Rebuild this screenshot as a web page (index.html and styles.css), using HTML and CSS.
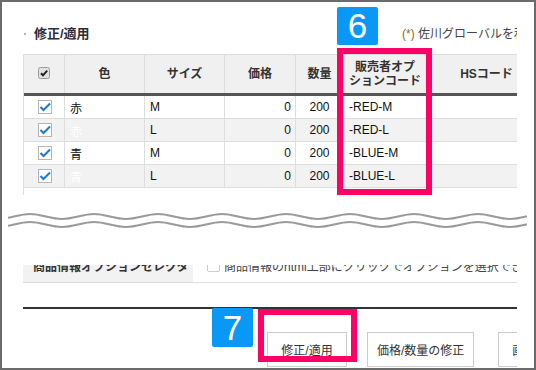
FILE: index.html
```html
<!DOCTYPE html>
<html lang="ja">
<head>
<meta charset="utf-8">
<title>修正/適用</title>
<link rel="stylesheet" href="styles.css">
</head>
<body>
<div class="frame">
  <div class="col top">
    <div class="title-row">
      <h2 class="title"><span class="dot"></span>修正/適用</h2>
      <p class="note"><span class="ast">(*)</span> 佐川グローバルを利用する場合は必須です</p>
    </div>
    <div class="grid-wrap">
      <div class="row head">
        <div class="cell first">
          <svg class="hcheck" width="12" height="12" viewBox="0 0 12 12"><rect x="0.5" y="0.5" width="11" height="11" rx="2" fill="#e2e2e2" stroke="#9a9a9a"/><path d="M3 6.2 L5 8.3 L9.2 3.6" fill="none" stroke="#222" stroke-width="2"/></svg>
        </div>
        <div class="cell">色</div>
        <div class="cell">サイズ</div>
        <div class="cell">価格</div>
        <div class="cell">数量</div>
        <div class="cell">販売者オプ<br>ションコード</div>
        <div class="cell">HSコード</div>
      </div>
      <div class="row">
        <div class="cell first"><svg class="rcheck" width="14" height="14" viewBox="0 0 14 14"><rect x="0.5" y="0.5" width="13" height="13" fill="#fff" stroke="#b5b5b5"/><path d="M2.5 7 L5.5 10 L12 3.5" fill="none" stroke="#1a78cf" stroke-width="2"/></svg></div>
        <div class="cell">赤</div>
        <div class="cell">M</div>
        <div class="cell num">0</div>
        <div class="cell qty">200</div>
        <div class="cell">-RED-M</div>
        <div class="cell"></div>
      </div>
      <div class="row alt">
        <div class="cell first"><svg class="rcheck" width="14" height="14" viewBox="0 0 14 14"><rect x="0.5" y="0.5" width="13" height="13" fill="#fff" stroke="#b5b5b5"/><path d="M2.5 7 L5.5 10 L12 3.5" fill="none" stroke="#1a78cf" stroke-width="2"/></svg></div>
        <div class="cell faint">赤</div>
        <div class="cell">L</div>
        <div class="cell num">0</div>
        <div class="cell qty">200</div>
        <div class="cell">-RED-L</div>
        <div class="cell"></div>
      </div>
      <div class="row">
        <div class="cell first"><svg class="rcheck" width="14" height="14" viewBox="0 0 14 14"><rect x="0.5" y="0.5" width="13" height="13" fill="#fff" stroke="#b5b5b5"/><path d="M2.5 7 L5.5 10 L12 3.5" fill="none" stroke="#1a78cf" stroke-width="2"/></svg></div>
        <div class="cell">青</div>
        <div class="cell">M</div>
        <div class="cell num">0</div>
        <div class="cell qty">200</div>
        <div class="cell">-BLUE-M</div>
        <div class="cell"></div>
      </div>
      <div class="row alt">
        <div class="cell first"><svg class="rcheck" width="14" height="14" viewBox="0 0 14 14"><rect x="0.5" y="0.5" width="13" height="13" fill="#fff" stroke="#b5b5b5"/><path d="M2.5 7 L5.5 10 L12 3.5" fill="none" stroke="#1a78cf" stroke-width="2"/></svg></div>
        <div class="cell faint">青</div>
        <div class="cell">L</div>
        <div class="cell num">0</div>
        <div class="cell qty">200</div>
        <div class="cell">-BLUE-L</div>
        <div class="cell"></div>
      </div>
    </div>
  </div>

  <div class="break">
    <svg class="wave" width="519" height="24" viewBox="0 0 519 24">
      <path d="M-42 6 C-30.5 6 -21.5 11 -10 11 s20.5 -5 32 -5 s20.5 5 32 5 s20.5 -5 32 -5 s20.5 5 32 5 s20.5 -5 32 -5 s20.5 5 32 5 s20.5 -5 32 -5 s20.5 5 32 5 s20.5 -5 32 -5 s20.5 5 32 5 s20.5 -5 32 -5 s20.5 5 32 5 s20.5 -5 32 -5 s20.5 5 32 5 s20.5 -5 32 -5 s20.5 5 32 5 s20.5 -5 32 -5 s20.5 5 32 5" fill="none" stroke="#9a9a9a" stroke-width="2"/>
      <path d="M-42 14 C-30.5 14 -21.5 19 -10 19 s20.5 -5 32 -5 s20.5 5 32 5 s20.5 -5 32 -5 s20.5 5 32 5 s20.5 -5 32 -5 s20.5 5 32 5 s20.5 -5 32 -5 s20.5 5 32 5 s20.5 -5 32 -5 s20.5 5 32 5 s20.5 -5 32 -5 s20.5 5 32 5 s20.5 -5 32 -5 s20.5 5 32 5 s20.5 -5 32 -5 s20.5 5 32 5 s20.5 -5 32 -5 s20.5 5 32 5" fill="none" stroke="#9a9a9a" stroke-width="2"/>
    </svg>
  </div>

  <div class="col bottom">
    <div class="partial">
      <div class="prow">
        <div class="plabel">商品情報オプションセレクタ</div>
        <div class="pval"><span class="pbox"></span>商品情報のhtml上部にクリックでオプションを選択できる画面を表示</div>
      </div>
    </div>
    <div class="rule"></div>
    <div class="buttons">
      <button class="btn">修正/適用</button>
      <button class="btn b2">価格/数量の修正</button>
      <button class="btn b3">画像の修正</button>
    </div>
  </div>

  <div class="badge b6">6</div>
  <div class="hl hl1"></div>
  <div class="badge b7">7</div>
  <div class="hl hl2"></div>
</div>
</body>
</html>
```

FILE: styles.css
```css
html, body {
  margin: 0;
  padding: 0;
  background: #fff;
}

.frame {
  position: relative;
  width: 536px;
  height: 370px;
  box-sizing: border-box;
  border: 2px solid #6b6b6b;
  overflow: hidden;
  background: #fff;
  font-family: "Liberation Sans", "Noto Sans CJK JP", sans-serif;
  font-size: 12px;
  color: #333;
}

.col {
  margin-left: 21px;
  width: 494px;
  overflow: hidden;
}

.title-row {
  display: flex;
  align-items: flex-start;
  height: 52px;
  box-sizing: border-box;
  padding-top: 24px;
}

.title {
  flex: none;
  width: 379px;
  margin: 0;
  display: flex;
  align-items: center;
  font-size: 13px;
  font-weight: bold;
  line-height: 16px;
  color: #2d2d3a;
}

.dot {
  width: 2px;
  height: 2px;
  background: #a7bacd;
  margin: 0 8px 0 1px;
}

.note {
  flex: none;
  margin: 0;
  white-space: nowrap;
  line-height: 16px;
  font-size: 12px;
  color: #444;
}

.ast {
  color: #8a6a2a;
}

.grid-wrap {
  border-left: 1px solid #ddd;
  padding-bottom: 7px;
}

.row {
  display: grid;
  grid-template-columns: 40px 80px 80px 71px 48px 83px 120px;
  height: 23px;
  box-sizing: border-box;
  border-bottom: 1px solid #ddd;
  background: #fff;
  color: #111;
}

.row.alt {
  background: #f2f2f2;
}

.row.head {
  height: 42px;
  border-top: 1px solid #ddd;
  border-bottom: 3px solid #555;
  background: #f0f0f0;
  font-weight: bold;
  color: #333;
}

.cell {
  box-sizing: border-box;
  border-left: 1px solid #ddd;
  display: flex;
  align-items: center;
  padding: 0 5px;
  white-space: nowrap;
  overflow: hidden;
}

.head .cell {
  justify-content: center;
  text-align: center;
  line-height: 14px;
}

.cell.first {
  border-left: none;
  justify-content: center;
  padding: 0;
}

.rcheck {
  display: block;
  margin-left: 1px;
}

.hcheck {
  display: block;
  margin-top: -2px;
}

.cell.num {
  justify-content: flex-end;
  padding-right: 4px;
}

.cell.qty {
  justify-content: center;
}

.cell.faint {
  color: #fff;
}

.break {
  height: 57px;
}

.wave {
  display: block;
  margin: 13px 0 0 6px;
}

.partial {
  height: 17px;
  overflow: hidden;
  border-bottom: 1px solid #ddd;
}

.prow {
  display: grid;
  grid-template-columns: 170px 1fr;
  height: 34px;
  margin-top: -17px;
}

.plabel {
  background: #f2f2f2;
  display: flex;
  align-items: center;
  padding-left: 10px;
  font-weight: bold;
  white-space: nowrap;
}

.pval {
  display: flex;
  align-items: center;
  padding-left: 14px;
  white-space: nowrap;
  color: #444;
}

.pbox {
  width: 11px;
  height: 11px;
  border: 1px solid #ccc;
  border-radius: 2px;
  margin-right: 4px;
  background: #fff;
}

.rule {
  height: 2px;
  background: #333;
  margin-top: 24px;
}

.buttons {
  display: flex;
  padding-left: 244px;
  margin-top: 23px;
}

.btn {
  flex: none;
  height: 35px;
  min-width: 80px;
  box-sizing: border-box;
  padding: 0 9px;
  border: 1px solid #ccc;
  background: #fff;
  font-family: "Liberation Sans", "Noto Sans CJK JP", sans-serif;
  font-size: 12px;
  color: #333;
}

.btn.b2 {
  margin-left: 20px;
}

.btn.b3 {
  margin-left: 24px;
  padding: 0 13px;
}

.badge {
  position: absolute;
  width: 41px;
  height: 38px;
  background: #0a98f6;
  border-radius: 2px;
  color: #fff;
  font-family: "Liberation Sans", Arial, sans-serif;
  font-size: 35px;
  line-height: 38px;
  text-align: center;
}

.b6 {
  left: 335px;
  top: 5px;
}

.b7 {
  left: 210px;
  top: 306px;
  height: 39px;
  line-height: 39px;
}

.hl {
  position: absolute;
  box-sizing: border-box;
  border: 6px solid #ff0066;
}

.hl1 {
  left: 335px;
  top: 46px;
  width: 95px;
  height: 147px;
}

.hl2 {
  left: 256px;
  top: 307px;
  width: 99px;
  height: 53px;
}
```
